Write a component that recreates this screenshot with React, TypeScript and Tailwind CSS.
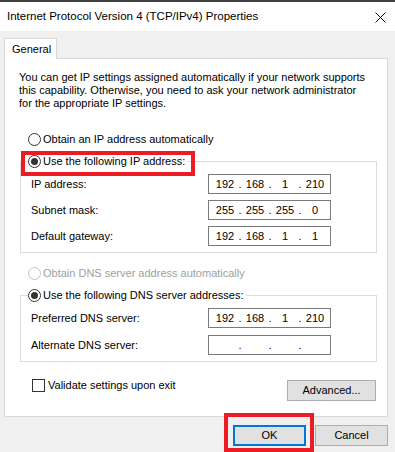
import React, { Fragment } from 'react';

function Radio({ checked, disabled }: { checked?: boolean; disabled?: boolean }) {
  return (
    <span
      className={`w-[13px] h-[13px] shrink-0 rounded-full border bg-white flex items-center justify-center ${
        disabled ? 'border-[#c4c4c4]' : 'border-[#333333]'
      }`}
    >
      {checked && <span className="w-[7px] h-[7px] rounded-full bg-[#333333]" />}
    </span>
  );
}

function IpBox({ parts }: { parts: string[] }) {
  return (
    <div className="w-[123px] h-[20px] border border-[#7a7a7a] bg-white flex items-center pl-[3px]">
      {parts.map((p, i) => (
        <Fragment key={i}>
          <span className="w-[26px] text-center">{p}</span>
          {i < 3 && <span className="w-[4px] text-center">.</span>}
        </Fragment>
      ))}
    </div>
  );
}

function Row({ label, parts }: { label: string; parts: string[] }) {
  return (
    <div className="h-[20px] flex items-center justify-between pl-[10px] pr-[45px]">
      <span>{label}</span>
      <IpBox parts={parts} />
    </div>
  );
}

function App() {
  return (
    <div className="relative w-[395px] h-[452px] overflow-hidden bg-[#f0f0f0] text-black text-[11px] leading-[13px] font-['Liberation_Sans',Arial,sans-serif]">
      <div className="h-[2px] bg-[#404040]" />
      {/* title bar */}
      <div className="h-[29px] bg-white flex items-center justify-between pl-[7px] pr-[9px]">
        <span className="text-[11.5px]">Internet Protocol Version 4 (TCP/IPv4) Properties</span>
        <svg width="11" height="11" viewBox="0 0 11 11" className="mt-[1px]">
          <path d="M0.5 0.5 L10.5 10.5 M10.5 0.5 L0.5 10.5" stroke="#111" strokeWidth="1" />
        </svg>
      </div>

      <div className="px-[4px] pt-[7px]">
        <div className="w-[53px] h-[21px] bg-white border border-b-0 border-[#d9d9d9] flex items-center pl-[7px] relative z-10">
          General
        </div>
        <div className="h-[359px] -mt-px bg-white border border-[#d9d9d9] w-[384px]">
          <p className="mt-[12px] ml-[14px] whitespace-nowrap">
            You can get IP settings assigned automatically if your network supports
            <br />
            this capability. Otherwise, you need to ask your network administrator
            <br />
            for the appropriate IP settings.
          </p>

          <div className="mt-[21px] ml-[23px] h-[16px] flex items-center gap-[2px]">
            <Radio />
            <span>Obtain an IP address automatically</span>
          </div>

          <div className="mt-[14px] ml-[15px] w-[357px] border border-[#dcdcdc] pb-[6px]">
            <div className="-mt-[9px] ml-[7px] h-[16px] flex items-center gap-[2px] bg-white w-fit pr-[2px]">
              <Radio checked />
              <span>Use the following IP address:</span>
            </div>
            <div className="mt-[5px] flex flex-col gap-[6px]">
              <Row label="IP address:" parts={['192', '168', '1', '210']} />
              <Row label="Subnet mask:" parts={['255', '255', '255', '0']} />
              <Row label="Default gateway:" parts={['192', '168', '1', '1']} />
            </div>
          </div>

          <div className="mt-[12px] ml-[23px] h-[16px] flex items-center gap-[2px] text-[#a0a0a0]">
            <Radio disabled />
            <span>Obtain DNS server address automatically</span>
          </div>

          <div className="mt-[14px] ml-[15px] w-[357px] border border-[#dcdcdc] pb-[6px]">
            <div className="-mt-[9px] ml-[7px] h-[16px] flex items-center gap-[2px] bg-white w-fit pr-[2px]">
              <Radio checked />
              <span>Use the following DNS server addresses:</span>
            </div>
            <div className="mt-[5px] flex flex-col gap-[7px]">
              <Row label="Preferred DNS server:" parts={['192', '168', '1', '210']} />
              <Row label="Alternate DNS server:" parts={['', '', '', '']} />
            </div>
          </div>

          <div className="mt-[17px] ml-[27px] mr-[11px] flex items-start justify-between">
            <div className="flex items-center gap-[3px] h-[13px]">
              <span className="w-[13px] h-[13px] border border-[#333333] bg-white" />
              <span>Validate settings upon exit</span>
            </div>
            <button className="mt-[1px] w-[89px] h-[21px] bg-[#e1e1e1] border border-[#adadad] text-[11px]">
              Advanced...
            </button>
          </div>
        </div>

        <div className="mt-[8px] pr-[3px] flex justify-end gap-[9px]">
          <button className="w-[73px] h-[21px] bg-[#e1e1e1] border-2 border-[#0078d7] text-[11px]">OK</button>
          <button className="w-[73px] h-[21px] bg-[#e1e1e1] border border-[#adadad] text-[11px]">Cancel</button>
        </div>
      </div>

      {/* red annotation boxes */}
      <div className="absolute left-[21px] top-[151px] w-[174px] h-[25px] border-4 border-[#ed1c24] pointer-events-none" />
      <div className="absolute left-[224px] top-[413px] w-[90px] h-[39px] border-4 border-[#ed1c24] pointer-events-none" />
    </div>
  );
}

export default App;
